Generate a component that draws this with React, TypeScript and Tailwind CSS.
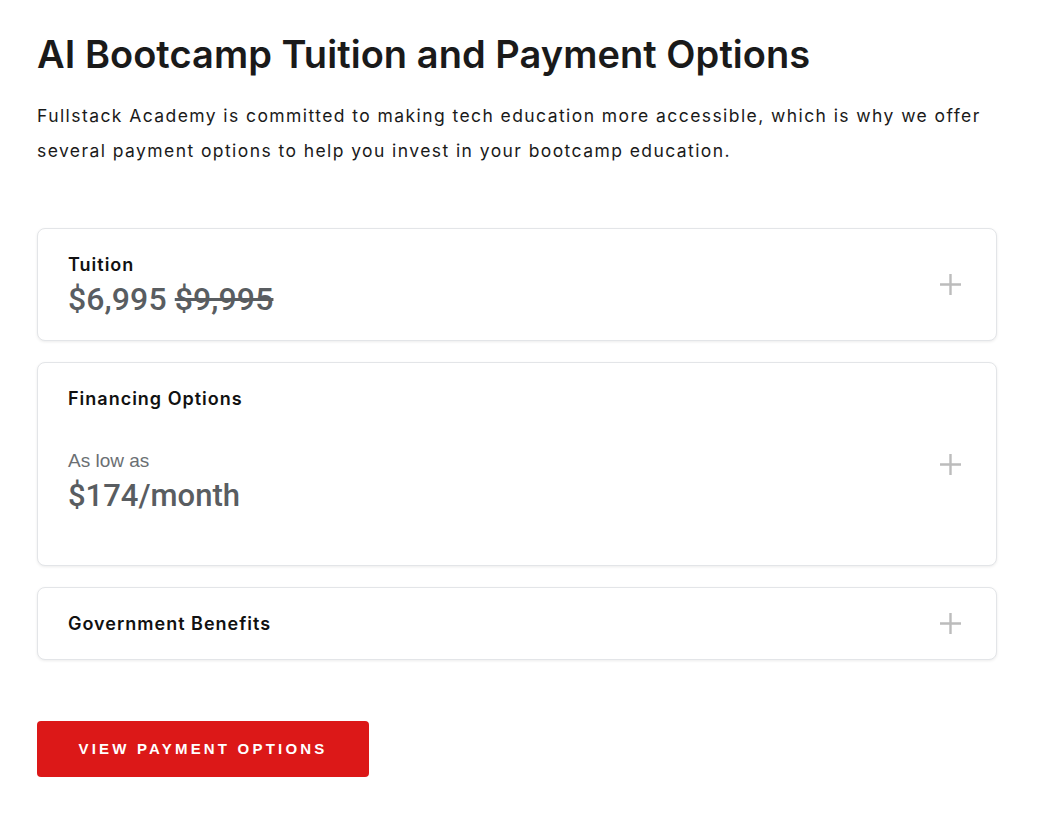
import { useState } from "react";

const grotesk = "font-['Inter',sans-serif]";
const arial = "font-['Liberation_Sans',Arial,sans-serif]";
const price = "font-['Roboto',Arial,sans-serif]";

function Plus() {
  return (
    <svg width="21" height="21" viewBox="0 0 21 21" fill="none" className="shrink-0">
      <path d="M10.5 0V21M0 10.5H21" stroke="#bcbcbc" strokeWidth="2.4" />
    </svg>
  );
}

type Item = { title: string; body?: React.ReactNode };

export default function App() {
  const [open, setOpen] = useState<number | null>(null);

  const items: Item[] = [
    {
      title: "Tuition",
      body: (
        <div className={`${price} mt-[3px] mb-[-3px] text-[32px] leading-[40px] font-medium tracking-[0.1px] text-[#595d61]`}>
          $6,995 <span className="line-through">$9,995</span>
        </div>
      ),
    },
    {
      title: "Financing Options",
      body: (
        <div className="mt-[39px] mb-[25px]">
          <div className={`${arial} text-[19px] leading-[24px] text-[#6b6f73]`}>As low as</div>
          <div className={`${price} mt-[3px] text-[31px] leading-[40px] font-medium text-[#595d61]`}>$174/month</div>
        </div>
      ),
    },
    { title: "Government Benefits" },
  ];

  return (
    <div className={`min-h-screen bg-white px-[37px] pt-[30px] pb-10 ${grotesk} text-[#1a1a1a]`}>
      <h1 className="text-[38px] leading-[48px] font-semibold tracking-[0.05px]">
        AI Bootcamp Tuition and Payment Options
      </h1>
      <p className="mt-[20px] w-[960px] text-[17.5px] leading-[35px] tracking-[1.42px] text-[#1a1a1a]">
        Fullstack Academy is committed to making tech education more accessible, which is why we offer several
        payment options to help you invest in your bootcamp education.
      </p>

      <div className="mt-[60px] w-[960px] flex flex-col gap-[21px]">
        {items.map((it, i) => (
          <button
            key={it.title}
            onClick={() => setOpen(open === i ? null : i)}
            className="w-full text-left bg-white border border-[#e3e5e8] rounded-[8px] shadow-[0_1px_3px_rgba(0,0,0,0.08)] pl-[30px] pr-[35px] py-[24px] flex items-center justify-between"
          >
            <div>
              <div className="text-[18px] leading-[23px] font-semibold tracking-[1px] text-[#111]">{it.title}</div>
              {it.body}
            </div>
            <Plus />
          </button>
        ))}
      </div>

      <button
        className={`mt-[61px] w-[332px] h-[56px] bg-[#dc1818] rounded-[4px] text-white ${arial} font-bold text-[15px] tracking-[3.2px] uppercase`}
      >
        View Payment Options
      </button>
    </div>
  );
}
